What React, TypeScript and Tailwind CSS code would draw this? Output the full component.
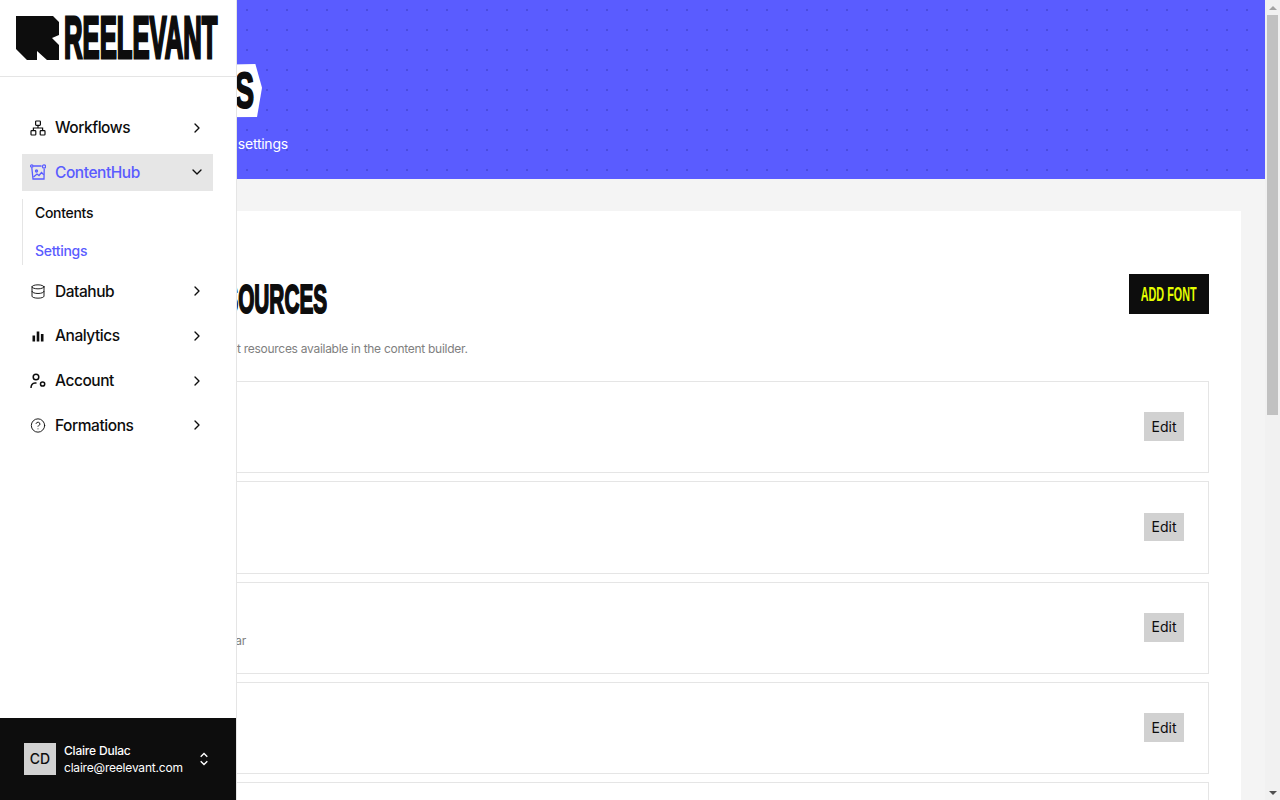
import { ChevronDown, ChevronRight, CircleHelp, Database } from "lucide-react";

const fonts = ["Arial", "Inter", "Montserrat", "Roboto", "Open Sans", "Lato", "Poppins", "Raleway", "Georgia", "Verdana", "Helvetica"];

function Row({ name, sub }: { name: string; sub: string }) {
  return (
    <div className="flex h-[92.33px] items-center justify-between border border-[#e5e5e5] px-6">
      <div className="mb-[1px]">
        <div className="text-base font-medium text-[#0d0d0d]">{name}</div>
        <div className="ml-[7px] mt-1 text-xs tracking-[-0.2px] text-[#808080]">{sub}</div>
      </div>
      <button className="mb-[1px] flex h-[28.5px] w-10 items-center justify-center bg-[#d1d1d1] text-sm text-[#0d0d0d]">Edit</button>
    </div>
  );
}

function WorkflowIcon() {
  return (
    <svg width="16" height="16" viewBox="0 0 16 16" fill="none" stroke="#0d0d0d" strokeWidth="1.2">
      <rect x="5.6" y="1" width="4.8" height="4.4" rx="0.8" />
      <rect x="1" y="10.6" width="4.8" height="4.4" rx="0.8" />
      <rect x="10.2" y="10.6" width="4.8" height="4.4" rx="0.8" />
      <path d="M8 5.4V8M3.4 10.6V8H12.6V10.6" />
    </svg>
  );
}

function ContentHubIcon() {
  return (
    <svg width="16" height="16" viewBox="0 0 16 16" fill="none" stroke="#5a5cff" strokeWidth="1.3">
      <path d="M1.8 3.5 3 15H14L14.2 5M3.2 2H11.5" />
      <circle cx="1.8" cy="2" r="1.2" />
      <circle cx="14" cy="2.5" r="1.6" />
      <circle cx="6.5" cy="7" r="1" />
      <path d="M3.5 13 7 10l2 1.5 2.5-3 2.3 2.3" />
    </svg>
  );
}

function BarsIcon() {
  return (
    <svg width="16" height="16" viewBox="0 0 16 16" fill="#0d0d0d">
      <rect x="2.5" y="7.5" width="2.6" height="6" />
      <rect x="6.7" y="3.5" width="2.6" height="10" />
      <rect x="10.9" y="6" width="2.6" height="7.5" />
    </svg>
  );
}

function AccountIcon() {
  return (
    <svg width="16" height="16" viewBox="0 0 16 16" fill="none" stroke="#0d0d0d" strokeWidth="1.5">
      <circle cx="6" cy="4" r="2.8" />
      <path d="M1 15c0-3 1.6-4.8 4-5h1.5" />
      <circle cx="12.6" cy="11" r="2.1" />
    </svg>
  );
}

function UpDownIcon() {
  return (
    <svg width="16" height="16" viewBox="0 0 16 16" fill="none" stroke="#ffffff" strokeWidth="1.4">
      <path d="M4.7 5.8 8 2.5l3.3 3.3M4.7 10.2 8 13.5l3.3-3.3" />
    </svg>
  );
}

function NavItem({ icon, label }: { icon: React.ReactNode; label: string }) {
  return (
    <div className="flex h-[36.67px] items-center px-2">
      <span className="flex w-4 justify-center">{icon}</span>
      <span className="ml-[9px] flex-1 text-[15.5px] font-medium tracking-[-0.45px] text-[#0d0d0d]">{label}</span>
      <ChevronRight size={16} color="#0d0d0d" />
    </div>
  );
}

function Scrollbar() {
  return (
    <div className="fixed right-0 top-0 z-20 flex h-screen w-[15px] flex-col bg-[#f1f1f1]">
      <div className="flex h-[15px] shrink-0 items-center justify-center">
        <svg width="8" height="4" viewBox="0 0 8 4" fill="#a3a3a3"><path d="M4 0 8 4H0Z" /></svg>
      </div>
      <div className="mx-[2px] h-[400px] bg-[#c1c1c1]" />
      <div className="mt-auto flex h-[15px] shrink-0 items-center justify-center">
        <svg width="8" height="4" viewBox="0 0 8 4" fill="#505050"><path d="M0 0H8L4 4Z" /></svg>
      </div>
    </div>
  );
}

export default function App() {
  return (
    <div className="h-screen overflow-hidden bg-[#f4f4f4] pr-[15px] font-['Inter',sans-serif]">
      <aside className="fixed left-0 top-0 z-10 flex h-screen w-[237px] flex-col border-r border-[#e5e5e5] bg-white">
        <div className="flex h-[77px] shrink-0 items-start border-b border-[#e5e5e5] pl-4 pt-4">
          <svg width="43" height="44" viewBox="0 0 43 44" fill="#0d0d0d" className="shrink-0">
            <path d="M0 0H37L43 6V19L36 22 43 29V44H31L21 35V44H11L0 33Z" />
          </svg>
          <div className="ml-[5px] w-[154px]">
            <span className="block w-max origin-left scale-x-[0.435] whitespace-nowrap font-['Liberation_Sans',sans-serif] text-[59px] font-bold leading-[44px] text-[#0d0d0d] [-webkit-text-stroke:3px_#0d0d0d]">
              REELEVANT
            </span>
          </div>
        </div>
        <nav className="flex flex-col gap-2 pl-[22px] pr-[23px] pt-[32.4px]">
          <NavItem icon={<WorkflowIcon />} label="Workflows" />
          <div className="flex h-[36.67px] items-center bg-[#e6e6e6] px-2">
            <span className="flex w-4 justify-center"><ContentHubIcon /></span>
            <span className="ml-[9px] flex-1 text-[15.5px] font-medium tracking-[-0.45px] text-[#5a5cff]">ContentHub</span>
            <ChevronDown size={16} color="#0d0d0d" />
          </div>
          <div className="flex flex-col gap-[9px] border-l border-[#e5e5e5] pl-3 text-sm font-medium tracking-[-0.3px]">
            <div className="flex h-[28.6px] items-center text-[#0d0d0d]">Contents</div>
            <div className="flex h-[28.6px] items-center text-[#5a5cff]">Settings</div>
          </div>
          <NavItem icon={<Database size={17} strokeWidth={1.4} color="#0d0d0d" />} label="Datahub" />
          <NavItem icon={<BarsIcon />} label="Analytics" />
          <NavItem icon={<AccountIcon />} label="Account" />
          <NavItem icon={<CircleHelp size={17} strokeWidth={1.4} color="#0d0d0d" />} label="Formations" />
        </nav>
        <div className="mt-auto flex h-[82px] shrink-0 items-center bg-[#0d0d0d] px-6">
          <div className="flex h-8 w-8 shrink-0 items-center justify-center bg-[#d1d1d1] text-sm font-medium text-[#0d0d0d]">CD</div>
          <div className="ml-2 flex-1 text-xs leading-[17px] tracking-[-0.2px] text-white">
            <div className="font-medium">Claire Dulac</div>
            <div>claire@reelevant.com</div>
          </div>
          <UpDownIcon />
        </div>
      </aside>

      <header className="h-[179px] bg-[#5a5cff] bg-[radial-gradient(circle,#4a4ce0_1.4px,transparent_1.4px)] bg-[length:20px_20px] bg-[position:-3px_0px] pl-[96px] pt-[64px]">
        <div className="flex h-[54px] w-[166px] items-center bg-white pl-[13px] [clip-path:polygon(0_6%,96%_0,100%_44%,97%_98%,0_100%)]">
          <span className="block w-max origin-left scale-x-[0.58] whitespace-nowrap font-['Liberation_Sans',sans-serif] text-[50px] font-bold leading-none text-[#0d0d0d] [-webkit-text-stroke:2px_#0d0d0d]">SETTINGS</span>
        </div>
        <p className="mt-[16px] pl-[2px] text-sm tracking-[-0.25px] text-white">Manage your content settings</p>
      </header>

      <main className="ml-[77px] mr-6 mt-8 bg-white p-8">
        <div className="flex items-start justify-between pl-6 pt-[31px]">
          <h1 className="mt-[1px] w-[195px] shrink-0">
            <span className="block w-max origin-left scale-x-[0.52] whitespace-nowrap font-['Liberation_Sans',sans-serif] text-[40px] font-bold leading-[48px] text-[#0d0d0d] [-webkit-text-stroke:2px_#0d0d0d]">FONT RESOURCES</span>
          </h1>
          <button className="flex h-10 w-20 items-center justify-center overflow-hidden bg-[#0d0d0d]">
            <span className="block w-max shrink-0 scale-x-[0.54] whitespace-nowrap font-['Liberation_Sans',sans-serif] text-xl font-bold text-[#e6ff00]">ADD FONT</span>
          </button>
        </div>
        <p className="mt-[18.4px] pl-[43px] text-xs tracking-[-0.28px] text-[#808080]">Manage the font resources available in the content builder.</p>
        <div className="mt-[23.6px] flex flex-col gap-2">
          {fonts.map((f) => (
            <Row key={f} name={f} sub={f === "Montserrat" ? "Montserrat Regular" : "Regular"} />
          ))}
        </div>
      </main>
      <Scrollbar />
    </div>
  );
}
